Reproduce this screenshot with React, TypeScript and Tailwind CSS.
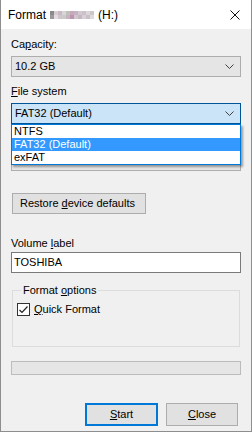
import type { ReactNode } from 'react'

const mosaic = [
  ['#8a8a8a', '#d6ccd2', '#c9b9c5', '#d9d4d8', '#bcc2b6', '#c7a7bb', '#c4b2c0', '#d2c8cf', '#c9c2c8', '#dcd6da', '#cfc6cc'],
  ['#9a9a9a', '#e2dce0', '#d2c4ce', '#c8ccc2', '#c9b3c2', '#b996ad', '#d3c4ce', '#c3b8c0', '#d8d0d6', '#c7c0c6', '#e0dadf'],
]

function Chevron() {
  return (
    <svg width="9" height="5" viewBox="0 0 9 5" className="shrink-0">
      <polyline points="0.5,0.5 4.5,4.5 8.5,0.5" fill="none" stroke="#404040" strokeWidth="1" />
    </svg>
  )
}

function Key({ children }: { children: ReactNode }) {
  return <span className="underline decoration-1 underline-offset-[1px]">{children}</span>
}

function Label({ children }: { children: ReactNode }) {
  return <div className="h-[15px] leading-[15px]">{children}</div>
}

export default function App() {
  return (
    <div
      className="flex h-[432px] w-[252px] flex-col border-x border-b border-[#8e8e8e] bg-[#f0f0f0] text-[11px] text-black"
      style={{ fontFamily: '"Liberation Sans", Arial, sans-serif' }}
    >
      {/* title bar */}
      <div className="flex h-[29px] shrink-0 items-center bg-white pl-[7px] pr-[10px] text-[12px]">
        <span>Format</span>
        <div className="ml-[4px] flex flex-col">
          {mosaic.map((row, r) => (
            <div key={r} className="flex">
              {row.map((c, i) => (
                <div key={i} className="h-[4px] w-[4px]" style={{ background: c }} />
              ))}
            </div>
          ))}
        </div>
        <span className="ml-[4px]">(H:)</span>
        <svg width="10" height="10" viewBox="0 0 10 10" className="ml-auto mr-[1px]">
          <path d="M0.5 0.5 L9.5 9.5 M9.5 0.5 L0.5 9.5" stroke="#111" strokeWidth="1" />
        </svg>
      </div>

      <div className="flex flex-col px-[10px]">
        <div className="mt-[8px]">
          <Label>
            Ca<Key>p</Key>acity:
          </Label>
        </div>
        <div className="mt-[4px] flex h-[21px] items-center justify-between border border-[#adadad] bg-[#e5e5e5] pl-[3px] pr-[6px]">
          <span>10.2 GB</span>
          <Chevron />
        </div>

        <div className="mt-[7px]">
          <Label>
            <Key>F</Key>ile system
          </Label>
        </div>
        <div className="relative z-10 mt-[4px]">
          <div className="flex h-[21px] items-center justify-between border border-[#005499] bg-[#cce4f7] pl-[3px] pr-[6px]">
            <span>FAT32 (Default)</span>
            <Chevron />
          </div>
          {/* open dropdown list */}
          <div className="absolute left-0 right-0 top-full border border-[#0078d7] bg-white shadow-[2px_2px_2px_rgba(0,0,0,0.35)]">
            <div className="h-[13px] pl-[2px] leading-[13px]">NTFS</div>
            <div className="h-[13px] bg-[#3399ff] pl-[2px] leading-[13px] text-white">FAT32 (Default)</div>
            <div className="h-[13px] pl-[2px] leading-[13px]">exFAT</div>
          </div>
        </div>

        {/* allocation unit size, hidden behind the list */}
        <div className="mt-[7px] h-[15px]" />
        <div className="mt-[4px] flex h-[21px] items-center justify-end border border-[#adadad] bg-[#e5e5e5] pr-[6px]">
          <Chevron />
        </div>

        <button className="ml-[1px] mt-[22px] flex h-[21px] w-[134px] items-center border border-[#adadad] bg-[#e1e1e1] pl-[7px]">
          <span>
            Restore <Key>d</Key>evice defaults
          </span>
        </button>

        <div className="mt-[22px]">
          <Label>
            Volume <Key>l</Key>abel
          </Label>
        </div>
        <div className="mt-[1px] flex h-[21px] items-center border border-[#7a7a7a] bg-white pl-[2px]">
          TOSHIBA
        </div>

        <fieldset className="mx-[1px] mt-[10px] h-[64px] border border-[#dcdcdc] px-[4px]">
          <legend className="ml-[4px] h-[15px] px-[2px] leading-[15px]">
            Format <Key>o</Key>ptions
          </legend>
          <div className="mt-[5px] flex h-[13px] items-center gap-[4px]">
            <div className="flex h-[13px] w-[13px] items-center justify-center border border-[#333333] bg-white">
              <svg width="9" height="8" viewBox="0 0 9 8">
                <polyline points="0.5,4 3,6.5 8.5,0.5" fill="none" stroke="#222" strokeWidth="1.2" />
              </svg>
            </div>
            <span>
              <Key>Q</Key>uick Format
            </span>
          </div>
        </fieldset>

        <div className="mt-[14px] h-[14px] border border-[#bcbcbc] bg-[#e6e6e6]" />

        <div className="mr-[3px] mt-[28px] flex justify-end gap-[8px]">
          <button className="flex h-[23px] w-[73px] items-center justify-center border-2 border-[#0078d7] bg-[#e1e1e1]">
            <span>
              <Key>S</Key>tart
            </span>
          </button>
          <button className="flex h-[23px] w-[72px] items-center justify-center border border-[#adadad] bg-[#e1e1e1]">
            <span>
              <Key>C</Key>lose
            </span>
          </button>
        </div>
      </div>
    </div>
  )
}
